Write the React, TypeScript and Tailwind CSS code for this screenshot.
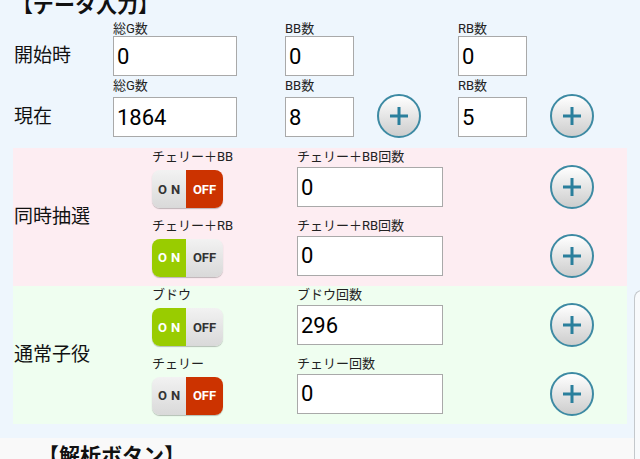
import React from "react";

const FONT = { fontFamily: "Roboto, 'Noto Sans CJK JP', 'Noto Sans', sans-serif" };

function Toggle({ on }: { on: boolean }) {
  return (
    <div className="flex h-[38px] w-[71px] overflow-hidden rounded-[8px] shadow-[0_1px_1px_rgba(0,0,0,0.25)] text-[13px] font-bold leading-none">
      <div
        className={
          on
            ? "flex w-[34px] items-center justify-center bg-[#99cc00] pl-[4px] tracking-[4px] text-white"
            : "flex w-[34px] items-center justify-center bg-gradient-to-b from-[#f2f2f2] to-[#d9d9d9] pl-[4px] tracking-[4px] text-[#333]"
        }
      >
        ON
      </div>
      <div
        className={
          on
            ? "flex w-[37px] items-center justify-center bg-gradient-to-b from-[#f2f2f2] to-[#d9d9d9] text-[#333]"
            : "flex w-[37px] items-center justify-center bg-[#cc3300] text-white"
        }
      >
        OFF
      </div>
    </div>
  );
}

function Plus() {
  return (
    <div className="flex h-[44px] w-[44px] items-center justify-center rounded-full border-2 border-[#3d8aa3] bg-gradient-to-b from-white to-[#cdcdcd]">
      <svg width="22" height="22" viewBox="0 0 22 22">
        <path d="M11 2V20M2 11H20" stroke="#2a7f9c" strokeWidth="3" fill="none" />
      </svg>
    </div>
  );
}

function Field({ label, value, w }: { label: string; value: string; w: string }) {
  return (
    <div className={"flex flex-col " + w}>
      <div className="h-[15px] text-[13px] leading-[15px] text-[#222]">{label}</div>
      <div className="mt-[var(--gap)] flex h-[40px] items-center border border-[#a9a9a9] bg-white pl-[3px] text-[22px] text-black">
        {value}
      </div>
    </div>
  );
}

function TopRow({
  title,
  g,
  bb,
  rb,
  plus,
  gap,
}: {
  title: string;
  g: string;
  bb: string;
  rb: string;
  plus: boolean;
  gap: string;
}) {
  return (
    <div className="flex items-end" style={{ ["--gap" as any]: gap }}>
      <div className="flex h-[40px] w-[113px] items-center pl-[14px] text-[19px] text-[#111]">{title}</div>
      <Field label="総G数" value={g} w="w-[124px]" />
      <div className="w-[48px]" />
      <Field label="BB数" value={bb} w="w-[69px]" />
      <div className="flex w-[104px] justify-start pl-[23px]">
        {plus ? <div className="mb-[-1px]"><Plus /></div> : null}
      </div>
      <Field label="RB数" value={rb} w="w-[69px]" />
      <div className="flex w-[92px] justify-start pl-[23px]">
        {plus ? <div className="mb-[-1px]"><Plus /></div> : null}
      </div>
    </div>
  );
}

function SubRow({ name, on, count }: { name: string; on: boolean; count: string }) {
  return (
    <div className="flex h-[69px] items-start" style={{ ["--gap" as any]: "3px" }}>
      <div className="flex w-[145px] flex-col">
        <div className="h-[15px] text-[13px] leading-[15px] text-[#222]">{name}</div>
        <div className="mt-[6px]">
          <Toggle on={on} />
        </div>
      </div>
      <Field label={name + "回数"} value={count} w="w-[146px]" />
      <div className="w-[107px]" />
      <div className="mt-[16px]">
        <Plus />
      </div>
    </div>
  );
}

function Section({
  title,
  bg,
  rows,
}: {
  title: string;
  bg: string;
  rows: { name: string; on: boolean; count: string }[];
}) {
  return (
    <div className={"ml-[13px] flex h-[138px] w-[614px] " + bg}>
      <div className="flex w-[139px] items-center pl-[1px] text-[19px] text-[#111]">{title}</div>
      <div className="flex flex-col pt-[1px]">
        {rows.map((r) => (
          <SubRow key={r.name} {...r} />
        ))}
      </div>
    </div>
  );
}

export default function App() {
  return (
    <div className="relative h-[459px] w-[640px] overflow-hidden bg-[#eef6fd]" style={FONT}>
      <div className="mt-[-6px] h-[22px] pl-[12px] text-[21px] font-bold leading-[22px] text-[#111]">【データ入力】</div>
      <div className="mt-[5px]">
        <TopRow title="開始時" g="0" bb="0" rb="0" plus={false} gap="0px" />
      </div>
      <div className="mt-[2px]">
        <TopRow title="現在" g="1864" bb="8" rb="5" plus={true} gap="4px" />
      </div>
      <div className="mt-[11px]">
        <Section
          title="同時抽選"
          bg="bg-[#fdedf2]"
          rows={[
            { name: "チェリー＋BB", on: false, count: "0" },
            { name: "チェリー＋RB", on: true, count: "0" },
          ]}
        />
        <Section
          title="通常子役"
          bg="bg-[#effef0]"
          rows={[
            { name: "ブドウ", on: true, count: "296" },
            { name: "チェリー", on: false, count: "0" },
          ]}
        />
      </div>
      <div className="mt-[14px] h-[40px] w-[634px] bg-[#f9f9f9] pl-[38px] pt-[6px]">
        <div className="text-[21px] font-bold leading-[24px] text-[#111]">【解析ボタン】</div>
      </div>
      <div className="absolute left-[634px] top-[290px] h-[200px] w-[20px] rounded-tl-[8px] border-l border-t border-[#c4c8cc] bg-[#f8fafc]" />
    </div>
  );
}
